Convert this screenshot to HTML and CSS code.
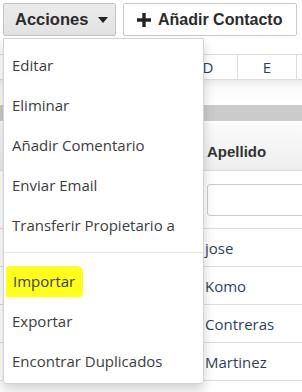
FILE: index.html
```html
<!DOCTYPE html>
<html lang="es">

<head>
  <title>Contactos</title>
  <meta charset="UTF-8">
  <meta name="viewport" content="width=device-width, initial-scale=1">
  <link rel="stylesheet" href="styles.css">
</head>

<body>
  <div class="page">
    <div class="toolbar">
      <button class="btn btn-actions">Acciones <span class="caret"></span></button>
      <button class="btn btn-add">
        <svg class="plus" width="14" height="14" viewBox="0 0 14 14">
          <path d="M5.3 0h3.4v5.3H14v3.4H8.7V14H5.3V8.7H0V5.3h5.3z" fill="#222"/>
        </svg>
        Añadir Contacto
      </button>
    </div>

    <div class="sheet">
      <div class="cols">
        <div class="col"></div>
        <div class="col"></div>
        <div class="col"></div>
        <div class="col">D</div>
        <div class="col">E</div>
        <div class="col"></div>
      </div>
      <div class="spacer"></div>
      <div class="band"></div>

      <div class="row head">
        <div class="cell sel"></div>
        <div class="cell">Apellido</div>
      </div>
      <div class="row filter">
        <div class="cell sel"></div>
        <div class="cell"><input type="text" class="search"></div>
      </div>
      <div class="row">
        <div class="cell sel"></div>
        <div class="cell">jose</div>
      </div>
      <div class="row">
        <div class="cell sel"></div>
        <div class="cell">Komo</div>
      </div>
      <div class="row">
        <div class="cell sel"></div>
        <div class="cell">Contreras</div>
      </div>
      <div class="row">
        <div class="cell sel"></div>
        <div class="cell">Martinez</div>
      </div>
    </div>

    <!-- menu opened from the Acciones button -->
    <ul class="dropdown">
      <li>Editar</li>
      <li>Eliminar</li>
      <li>Añadir Comentario</li>
      <li>Enviar Email</li>
      <li>Transferir Propietario a</li>
      <li class="divider"></li>
      <li><span class="marker">Importar</span></li>
      <li>Exportar</li>
      <li>Encontrar Duplicados</li>
    </ul>
  </div>
</body>

</html>
```

FILE: styles.css
```css
* {
  box-sizing: border-box;
}

body {
  margin: 0;
  background-color: #fff;
  font-family: "Open Sans", sans-serif;
  color: #333;
}

.page {
  position: relative;
  width: 302px;
  height: 392px;
  overflow: hidden;
}

/* Buttons on top */
.toolbar {
  display: flex;
  gap: 7px;
  padding: 3px 0 0 3px;
}

.btn {
  display: flex;
  align-items: center;
  height: 33px;
  border: 1px solid #c8c8c8;
  border-radius: 2px;
  font-family: "Liberation Sans", Arial, sans-serif;
  font-weight: bold;
  color: #2b2b2b;
  padding: 0;
}

.btn-actions {
  width: 113px;
  padding-left: 11px;
  font-size: 16.5px;
  background: linear-gradient(#ebebeb, #e2e2e2);
  border-color: #c4c4c4;
}

.caret {
  display: inline-block;
  margin-left: 10px;
  width: 0;
  height: 0;
  border-left: 5px solid transparent;
  border-right: 5px solid transparent;
  border-top: 6px solid #222;
}

.btn-add {
  width: 174px;
  padding-left: 13px;
  font-size: 16px;
  background-color: #fff;
}

.plus {
  margin-right: 7px;
}

/* Spreadsheet behind the menu */
.sheet {
  margin-top: 18px;
}

.cols {
  display: flex;
  height: 26px;
  border-top: 1px solid #ddd;
  border-bottom: 1px solid #ddd;
  padding-left: 2px;
}

.col {
  flex: 0 0 59px;
  border-right: 1px solid #ddd;
  text-align: center;
  font-size: 15px;
  line-height: 24px;
  color: #2f3f5c;
}

.spacer {
  height: 25px;
  background: linear-gradient(#ececec, #fafafa 30%, #fff);
}

.band {
  height: 18px;
  background-color: #cbcbcb;
  border-bottom: 2px solid #fff;
}

.row {
  display: flex;
  height: 38px;
  border-bottom: 1px solid #ddd;
  align-items: center;
  font-size: 15px;
  color: #2f3f5c;
}

.cell {
  padding-left: 7px;
}

.cell.sel {
  flex: 0 0 198px;
}

.row .cell:last-child {
  flex: 1;
}

.row.head {
  height: 48px;
  background: linear-gradient(#fbfbfb, #eeeeee);
  border-bottom: 1px solid #dcdcdc;
  font-family: "Liberation Sans", Arial, sans-serif;
  font-weight: bold;
  color: #333;
}

.row.head .cell {
  padding-left: 9px;
  padding-top: 9px;
}

.row.filter {
  height: 58px;
}

.search {
  display: block;
  width: 110px;
  height: 32px;
  margin-left: 2px;
  border: 1px solid #ccc;
  border-radius: 3px;
}

/* Dropdown menu */
.dropdown {
  position: absolute;
  top: 38px;
  left: 3px;
  width: 201px;
  margin: 0;
  padding: 6px 0 2px;
  list-style: none;
  background-color: #fff;
  border: 1px solid #d4d4d4;
  border-radius: 0 0 3px 3px;
  box-shadow: 0 6px 12px rgba(0, 0, 0, 0.18);
}

.dropdown li {
  height: 40px;
  line-height: 40px;
  padding-left: 8px;
  font-size: 15px;
  color: #3d3d3d;
  white-space: nowrap;
}

.dropdown li.divider {
  height: 1px;
  margin: 7px 0 8px;
  background-color: #e5e5e5;
}

.marker {
  background-color: #ffff1a;
  padding: 5px 8px 6px 7px;
  margin-left: -6px;
  border-radius: 3px 6px 4px 2px;
}
```
